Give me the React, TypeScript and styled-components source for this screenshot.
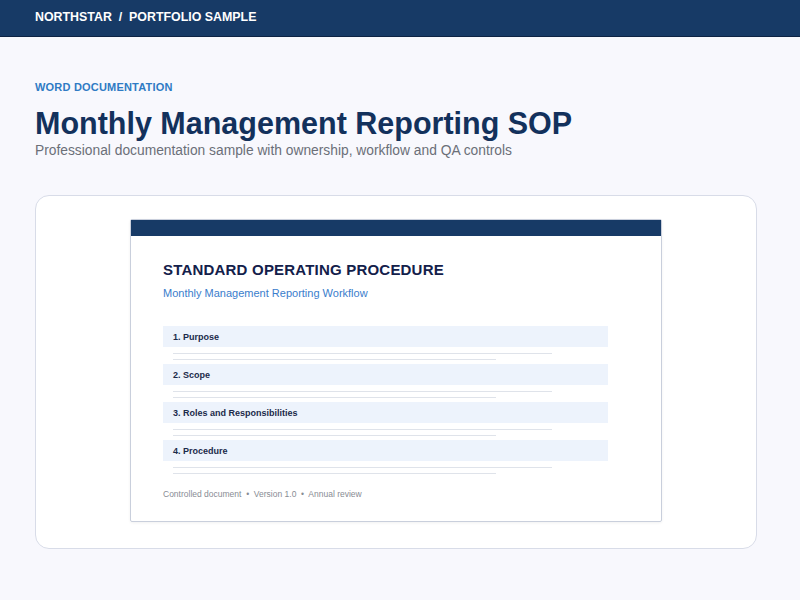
import React from "react";
import styled, { createGlobalStyle } from "styled-components";

const Global = createGlobalStyle`
  body {
    margin: 0;
    background: #f8f8fd;
    font-family: "Liberation Sans", Arial, sans-serif;
  }
`;

const sections = ["1. Purpose", "2. Scope", "3. Roles and Responsibilities", "4. Procedure"];

export default function App() {
  return (
    <>
      <Global />
      <TopBar>NORTHSTAR&nbsp;&nbsp;/&nbsp;&nbsp;PORTFOLIO SAMPLE</TopBar>
      <Main>
        <Eyebrow>WORD DOCUMENTATION</Eyebrow>
        <Title>Monthly Management Reporting SOP</Title>
        <Subtitle>Professional documentation sample with ownership, workflow and QA controls</Subtitle>
        <Card>
          <Doc>
            <DocBand />
            <DocBody>
              <DocTitle>STANDARD OPERATING PROCEDURE</DocTitle>
              <DocSub>Monthly Management Reporting Workflow</DocSub>
              <Sections>
                {sections.map((s) => (
                  <Section key={s}>
                    <SectionHead>{s}</SectionHead>
                    <TextLine $w={379} />
                    <TextLine $w={323} />
                  </Section>
                ))}
              </Sections>
              <Footer>Controlled document &nbsp;•&nbsp; Version 1.0 &nbsp;•&nbsp; Annual review</Footer>
            </DocBody>
          </Doc>
        </Card>
      </Main>
    </>
  );
}

const TopBar = styled.header`
  height: 37px;
  background: #173a66;
  border-bottom: 1px solid #0d2344;
  color: #fff;
  font-size: 12.4px;
  font-weight: bold;
  display: flex;
  align-items: center;
  padding: 0 35px 2px;
  box-sizing: border-box;
`;

const Main = styled.main`
  padding: 44px 35px 0 35px;
  display: flex;
  flex-direction: column;
`;

const Eyebrow = styled.div`
  color: #2f7bc4;
  font-size: 11px;
  font-weight: bold;
  letter-spacing: 0.2px;
`;

const Title = styled.h1`
  margin: 11px 0 0;
  color: #13315c;
  font-size: 30.5px;
  font-weight: bold;
  line-height: 38px;
`;

const Subtitle = styled.p`
  margin: 0;
  color: #6b6f78;
  font-size: 13.8px;
  line-height: 18px;
`;

const Card = styled.section`
  margin-top: 35px;
  width: 722px;
  height: 354px;
  box-sizing: border-box;
  background: #fff;
  border: 1.5px solid #d8dce8;
  border-radius: 14px;
  display: flex;
  justify-content: center;
  padding-top: 23px;
`;

const Doc = styled.div`
  width: 532px;
  height: 303px;
  box-sizing: border-box;
  border: 1px solid #c9cfdc;
  border-radius: 2px;
  display: flex;
  flex-direction: column;
  box-shadow: 0 1px 3px rgba(0, 0, 0, 0.06);
`;

const DocBand = styled.div`
  height: 16px;
  background: #173a66;
`;

const DocBody = styled.div`
  padding: 25px 32px 0;
  display: flex;
  flex-direction: column;
`;

const DocTitle = styled.div`
  color: #13204a;
  font-size: 15px;
  font-weight: bold;
  letter-spacing: 0.2px;
`;

const DocSub = styled.div`
  margin-top: 9px;
  color: #3a7dcc;
  font-size: 11px;
`;

const Sections = styled.div`
  margin-top: 27px;
  display: flex;
  flex-direction: column;
`;

const Section = styled.div`
  display: flex;
  flex-direction: column;
  height: 38px;
`;

const SectionHead = styled.div`
  width: 445px;
  height: 21px;
  background: #edf3fc;
  color: #1b2a4a;
  font-size: 9px;
  font-weight: bold;
  display: flex;
  align-items: center;
  padding-left: 10px;
  box-sizing: border-box;
`;

const TextLine = styled.div<{ $w: number }>`
  width: ${(p) => p.$w}px;
  height: 1px;
  background: #dfe3ea;
  margin: 6px 0 0 10px;
  & + & {
    margin-top: 5px;
  }
`;

const Footer = styled.div`
  margin-top: 11px;
  color: #888c94;
  font-size: 8.5px;
`;
